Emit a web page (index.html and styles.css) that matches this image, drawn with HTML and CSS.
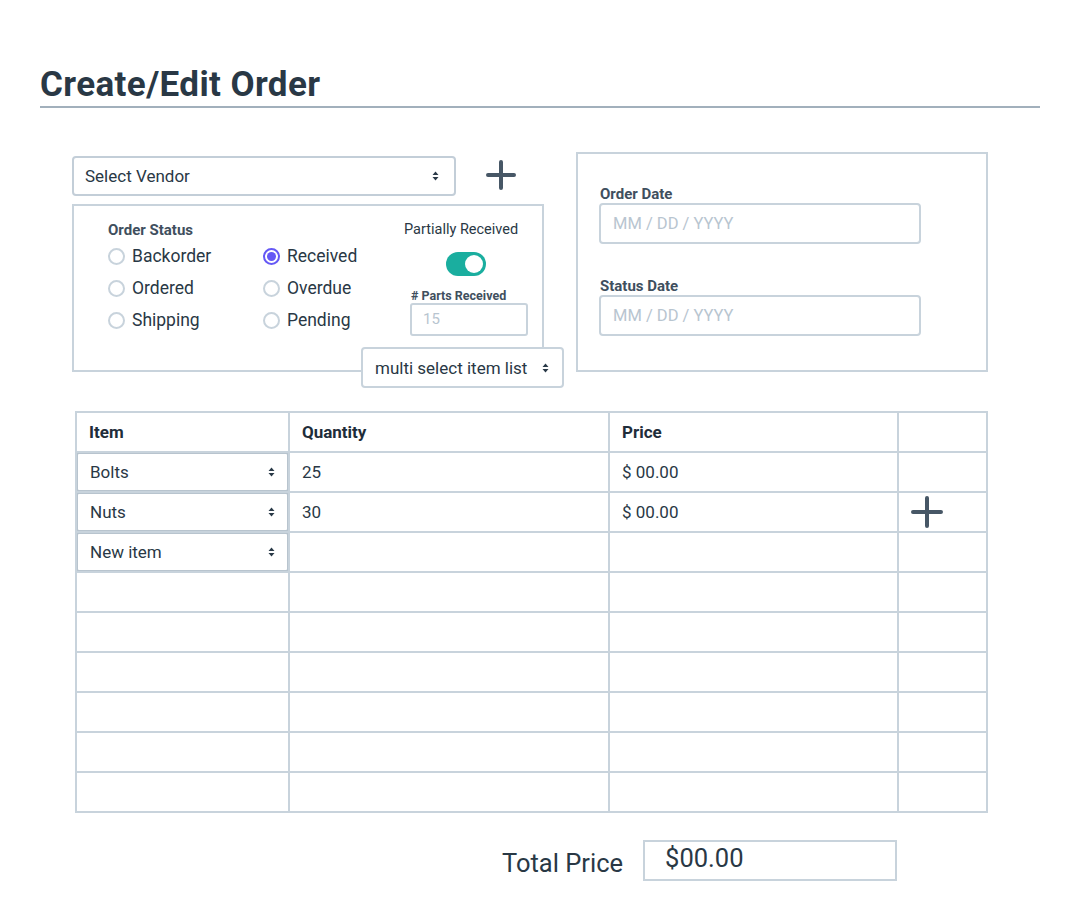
FILE: index.html
```html
<!DOCTYPE html>
<html lang="en">
<head>
<meta charset="utf-8">
<title>Create/Edit Order</title>
<link rel="stylesheet" href="styles.css">
</head>
<body>
<div class="page">
  <h1 class="title">Create/Edit Order</h1>

  <div class="top">
    <div class="left-col">
      <div class="vendor-row">
        <div class="select vendor-select">
          <span>Select Vendor</span>
          <svg class="caret" width="7" height="10" viewBox="0 0 7 10"><path d="M3.5 0.5 L6.5 4 H0.5 Z M3.5 9.5 L6.5 6 H0.5 Z" fill="#2a3a48"/></svg>
        </div>
        <svg class="plus vendor-plus" width="32" height="32" viewBox="0 0 32 32"><path d="M16 3 V29 M3 16 H29" stroke="#475766" stroke-width="4" stroke-linecap="round"/></svg>
      </div>

      <div class="status-box">
        <div class="status-left">
          <div class="small-label">Order Status</div>
          <div class="radio-grid">
            <label class="radio"><span class="dot"></span>Backorder</label>
            <label class="radio"><span class="dot on"></span>Received</label>
            <label class="radio"><span class="dot"></span>Ordered</label>
            <label class="radio"><span class="dot"></span>Overdue</label>
            <label class="radio"><span class="dot"></span>Shipping</label>
            <label class="radio"><span class="dot"></span>Pending</label>
          </div>
        </div>
        <div class="status-right">
          <div class="partial-label">Partially Received</div>
          <div class="toggle"><span class="knob"></span></div>
          <div class="tiny-label"># Parts Received</div>
          <div class="parts-input">15</div>
        </div>
        <div class="select multi-select">
          <span>multi select item list</span>
          <svg class="caret" width="7" height="10" viewBox="0 0 7 10"><path d="M3.5 0.5 L6.5 4 H0.5 Z M3.5 9.5 L6.5 6 H0.5 Z" fill="#2a3a48"/></svg>
        </div>
      </div>
    </div>

    <div class="date-box">
      <div class="small-label">Order Date</div>
      <div class="date-input">MM / DD / YYYY</div>
      <div class="small-label second">Status Date</div>
      <div class="date-input">MM / DD / YYYY</div>
    </div>
  </div>

  <table class="items">
    <colgroup>
      <col class="c1"><col class="c2"><col class="c3"><col class="c4">
    </colgroup>
    <thead>
      <tr><th>Item</th><th>Quantity</th><th>Price</th><th></th></tr>
    </thead>
    <tbody>
      <tr>
        <td class="sel-cell"><div class="select cell-select"><span>Bolts</span><svg class="caret" width="7" height="10" viewBox="0 0 7 10"><path d="M3.5 0.5 L6.5 4 H0.5 Z M3.5 9.5 L6.5 6 H0.5 Z" fill="#2a3a48"/></svg></div></td>
        <td>25</td><td>$ 00.00</td><td></td>
      </tr>
      <tr>
        <td class="sel-cell"><div class="select cell-select"><span>Nuts</span><svg class="caret" width="7" height="10" viewBox="0 0 7 10"><path d="M3.5 0.5 L6.5 4 H0.5 Z M3.5 9.5 L6.5 6 H0.5 Z" fill="#2a3a48"/></svg></div></td>
        <td>30</td><td>$ 00.00</td>
        <td class="plus-cell"><svg class="plus" width="34" height="34" viewBox="0 0 34 34"><path d="M17 3 V31 M3 17 H31" stroke="#475766" stroke-width="4" stroke-linecap="round"/></svg></td>
      </tr>
      <tr>
        <td class="sel-cell"><div class="select cell-select"><span>New item</span><svg class="caret" width="7" height="10" viewBox="0 0 7 10"><path d="M3.5 0.5 L6.5 4 H0.5 Z M3.5 9.5 L6.5 6 H0.5 Z" fill="#2a3a48"/></svg></div></td>
        <td></td><td></td><td></td>
      </tr>
      <tr><td></td><td></td><td></td><td></td></tr>
      <tr><td></td><td></td><td></td><td></td></tr>
      <tr><td></td><td></td><td></td><td></td></tr>
      <tr><td></td><td></td><td></td><td></td></tr>
      <tr><td></td><td></td><td></td><td></td></tr>
      <tr><td></td><td></td><td></td><td></td></tr>
    </tbody>
  </table>

  <div class="total-row">
    <span class="total-label">Total Price</span>
    <div class="total-box">$00.00</div>
  </div>
</div>
</body>
</html>
```

FILE: styles.css
```css
* { box-sizing: border-box; }

body {
  margin: 0;
  background: #ffffff;
  font-family: Roboto, "Noto Sans", "Liberation Sans", sans-serif;
  color: #293845;
}

.page {
  padding: 0 40px;
  width: 1080px;
}

.title {
  margin: 65px 0 0 0;
  font-size: 35px;
  line-height: 40px;
  font-weight: 700;
  color: #293845;
  padding-bottom: 1px;
  border-bottom: 2px solid #a2b0bc;
  width: 1000px;
  letter-spacing: 0.4px;
}

.top {
  display: flex;
  align-items: flex-start;
  margin-top: 44px;
  margin-left: 32px;
}

.left-col {
  width: 492px;
  margin-top: 4px;
}

.vendor-row {
  display: flex;
  align-items: center;
}

.select {
  display: flex;
  align-items: center;
  justify-content: space-between;
  border: 2px solid #c3ced8;
  border-radius: 4px;
  background: #fff;
  font-size: 17px;
  color: #293845;
}

.vendor-select {
  width: 384px;
  height: 40px;
  padding: 0 15px 0 11px;
}

.vendor-plus {
  margin-left: 29px;
  margin-top: -2px;
}

.status-box {
  position: relative;
  width: 472px;
  height: 168px;
  margin-top: 8px;
  border: 2px solid #c8d3dc;
  display: flex;
  padding: 14px 14px 0 34px;
}

.small-label {
  font-size: 15px;
  line-height: 20px;
  font-weight: 700;
  color: #3f4f5e;
}

.radio-grid {
  display: grid;
  grid-template-columns: 155px 120px;
  grid-auto-rows: 32px;
}

.radio {
  display: flex;
  align-items: center;
  font-size: 17.5px;
  color: #293845;
}

.dot {
  width: 17px;
  height: 17px;
  border: 2px solid #c8d3dc;
  border-radius: 50%;
  margin-right: 7px;
  flex: none;
  position: relative;
}

.dot.on {
  border-color: #6558f5;
}

.dot.on::after {
  content: "";
  position: absolute;
  left: 2px;
  top: 2px;
  width: 9px;
  height: 9px;
  border-radius: 50%;
  background: #6558f5;
}

.status-right {
  margin-left: 21px;
  width: 124px;
  display: flex;
  flex-direction: column;
}

.partial-label {
  font-size: 14.5px;
  line-height: 20px;
  color: #293845;
  white-space: nowrap;
}

.toggle {
  width: 40px;
  height: 24px;
  border-radius: 12px;
  background: #1aae9f;
  margin: 12px 0 0 42px;
  position: relative;
}

.knob {
  position: absolute;
  right: 3px;
  top: 3px;
  width: 18px;
  height: 18px;
  border-radius: 50%;
  background: #fff;
}

.tiny-label {
  font-size: 12.5px;
  line-height: 14px;
  font-weight: 700;
  color: #3f4f5e;
  margin: 13px 0 0 7px;
  white-space: nowrap;
}

.parts-input {
  width: 118px;
  height: 33px;
  margin-left: 6px;
  border: 2px solid #c8d3dc;
  border-radius: 3px;
  font-size: 15px;
  color: #b8c5d0;
  padding: 5px 0 0 11px;
}

.multi-select {
  position: absolute;
  left: 287px;
  top: 141px;
  width: 203px;
  height: 41px;
  padding: 0 13px 0 12px;
  border-color: #c8d3dc;
}

.date-box {
  margin-left: 12px;
  width: 412px;
  height: 220px;
  border: 2px solid #c8d3dc;
  padding: 31px 0 0 22px;
}

.date-box .small-label {
  line-height: 18px;
}

.date-box .small-label.second {
  margin-top: 33px;
}

.date-input {
  width: 322px;
  height: 41px;
  margin-left: -1px;
  border: 2px solid #c8d3dc;
  border-radius: 4px;
  font-size: 16.5px;
  color: #b8c5d0;
  padding: 9px 0 0 12px;
}

.items {
  margin: 39px 0 0 35px;
  border-collapse: collapse;
  table-layout: fixed;
  width: 913px;
}

.c1 { width: 213px; }
.c2 { width: 320px; }
.c3 { width: 289px; }
.c4 { width: 89px; }

.items th,
.items td {
  border: 2px solid #c8d3dc;
  height: 40px;
  padding: 0 12px;
  text-align: left;
  font-size: 17px;
  color: #293845;
}

.items th {
  font-weight: 700;
  color: #1f2d3a;
}

.items td.sel-cell {
  padding: 0;
}

.cell-select {
  height: 40px;
  width: calc(100% + 2px);
  margin: -1px 0 -1px -1px;
  padding: 0 12px 0 12px;
  border-color: #b8c4ce;
  border-radius: 3px;
}

.plus-cell {
  text-align: center;
  position: relative;
}

.plus-cell .plus {
  display: block;
  margin: 0 0 0 -1px;
}

.total-row {
  display: flex;
  align-items: center;
  margin: 27px 0 0 462px;
}

.total-label {
  font-size: 25.5px;
  line-height: 32px;
  color: #293845;
  margin-top: 4px;
}

.total-box {
  margin-left: 20px;
  width: 254px;
  height: 41px;
  border: 2px solid #c8d3dc;
  font-size: 25.5px;
  line-height: 32px;
  padding: 0 0 0 20px;
  color: #293845;
}
```
